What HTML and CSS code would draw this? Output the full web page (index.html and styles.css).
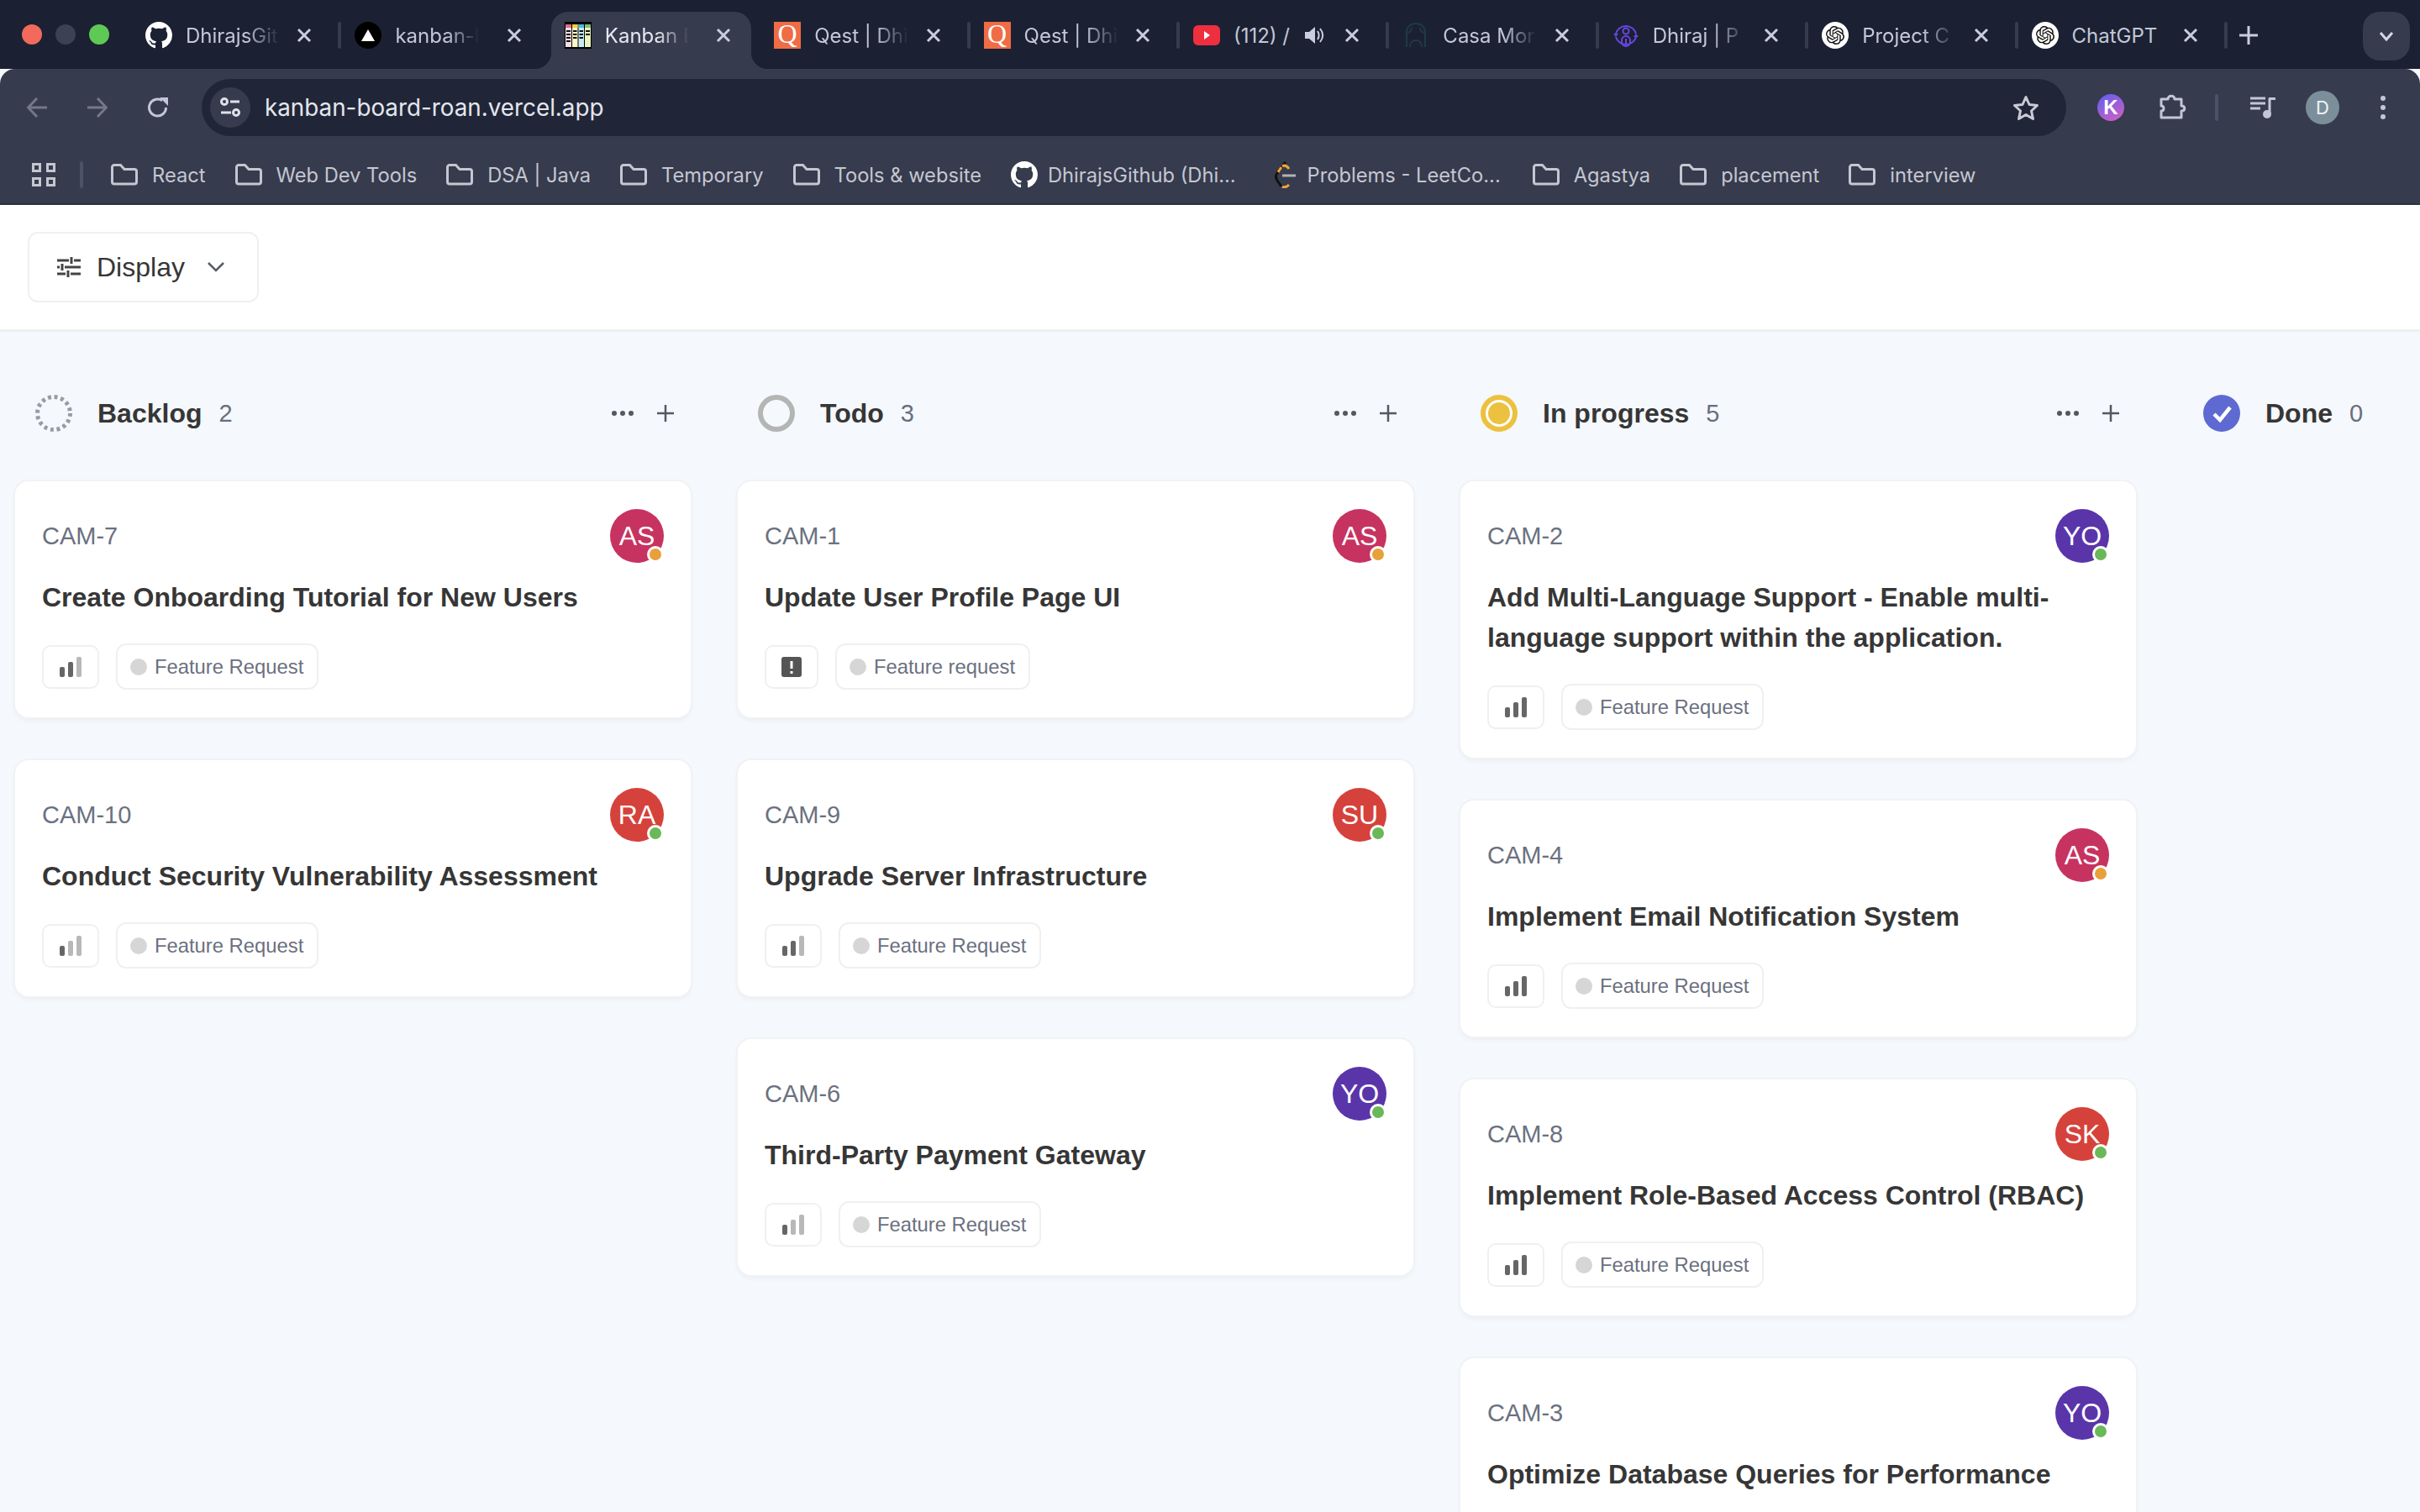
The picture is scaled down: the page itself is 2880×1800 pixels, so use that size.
FILE: index.html
```html
<!DOCTYPE html>
<html lang="en">
<head>
  <meta charset="UTF-8">
  <title>Kanban Board</title>
  <link rel="stylesheet" href="styles.css">
</head>
<body>

  <!-- shared icons -->
  <svg class="defs" width="0" height="0">
    <symbol id="i-github" viewBox="0 0 16 16"><path fill="#fff" d="M8 0C3.58 0 0 3.58 0 8c0 3.54 2.29 6.53 5.47 7.59.4.07.55-.17.55-.38 0-.19-.01-.82-.01-1.49-2.01.37-2.53-.49-2.69-.94-.09-.23-.48-.94-.82-1.13-.28-.15-.68-.52-.01-.53.63-.01 1.08.58 1.23.82.72 1.21 1.87.87 2.33.66.07-.52.28-.87.51-1.07-1.78-.2-3.64-.89-3.64-3.95 0-.87.31-1.59.82-2.15-.08-.2-.36-1.02.08-2.12 0 0 .67-.21 2.2.82.64-.18 1.32-.27 2-.27s1.36.09 2 .27c1.53-1.04 2.2-.82 2.2-.82.44 1.1.16 1.92.08 2.12.51.56.82 1.27.82 2.15 0 3.07-1.87 3.75-3.65 3.95.29.25.54.73.54 1.48 0 1.07-.01 1.93-.01 2.2 0 .21.15.46.55.38A8.013 8.013 0 0016 8c0-4.42-3.58-8-8-8z"/></symbol>
    <symbol id="i-close" viewBox="0 0 26 26"><path d="M6 6l14 14M20 6L6 20" stroke="#c9cddd" stroke-width="3" fill="none"/></symbol>
    <symbol id="i-folder" viewBox="0 0 32 26"><path d="M1.5 4a2.500 2.500 0 0 1 2.500-2.500h7.500l4.500 5h12a2.500 2.500 0 0 1 2.500 2.500v12.500a2.500 2.500 0 0 1-2.500 2.500H4a2.500 2.500 0 0 1-2.500-2.500z" fill="none" stroke="#c5c7d0" stroke-width="3"/></symbol>
    <symbol id="i-gpt" viewBox="0 0 32 32">
      <circle cx="16" cy="16" r="16" fill="#fff"/>
      <path transform="translate(5 5) scale(.917)" fill="#111" d="M22.282 9.821a5.985 5.985 0 0 0-.516-4.91 6.046 6.046 0 0 0-6.51-2.9A6.065 6.065 0 0 0 4.981 4.18a5.985 5.985 0 0 0-3.998 2.9 6.046 6.046 0 0 0 .743 7.097 5.98 5.98 0 0 0 .51 4.911 6.051 6.051 0 0 0 6.515 2.9A5.985 5.985 0 0 0 13.26 24a6.056 6.056 0 0 0 5.772-4.206 5.99 5.99 0 0 0 3.997-2.9 6.056 6.056 0 0 0-.747-7.073zM13.26 22.43a4.476 4.476 0 0 1-2.876-1.04l.141-.081 4.779-2.758a.795.795 0 0 0 .392-.681v-6.737l2.02 1.168a.071.071 0 0 1 .038.052v5.583a4.504 4.504 0 0 1-4.494 4.494zM3.6 18.304a4.47 4.47 0 0 1-.535-3.014l.142.085 4.783 2.759a.771.771 0 0 0 .78 0l5.843-3.369v2.332a.08.08 0 0 1-.033.062L9.74 19.95a4.5 4.5 0 0 1-6.14-1.646zM2.34 7.896a4.485 4.485 0 0 1 2.366-1.973V11.6a.766.766 0 0 0 .388.676l5.815 3.355-2.02 1.168a.076.076 0 0 1-.071 0l-4.83-2.786A4.504 4.504 0 0 1 2.34 7.872zm16.597 3.855l-5.833-3.387L15.119 7.2a.076.076 0 0 1 .071 0l4.83 2.791a4.494 4.494 0 0 1-.676 8.105v-5.678a.79.79 0 0 0-.407-.667zm2.01-3.023l-.141-.085-4.774-2.782a.776.776 0 0 0-.785 0L9.409 9.23V6.897a.066.066 0 0 1 .028-.061l4.83-2.787a4.5 4.5 0 0 1 6.68 4.66zm-12.64 4.135l-2.02-1.164a.08.08 0 0 1-.038-.057V6.075a4.5 4.5 0 0 1 7.375-3.453l-.142.08L8.704 5.46a.795.795 0 0 0-.393.681zm1.097-2.365l2.602-1.5 2.607 1.5v2.999l-2.597 1.5-2.607-1.5z"/>
    </symbol>
    <symbol id="i-dots" viewBox="0 0 26 6"><g fill="#55585f"><circle cx="3" cy="3" r="3"/><circle cx="13" cy="3" r="3"/><circle cx="23" cy="3" r="3"/></g></symbol>
    <symbol id="i-plus" viewBox="0 0 20 20"><path d="M10 0v20M0 10h20" stroke="#55585f" stroke-width="2.500" fill="none"/></symbol>
    <symbol id="i-bars1" viewBox="0 0 26 24"><rect x="0" y="12" width="6" height="12" rx="2" fill="#666"/><rect x="10" y="6" width="6" height="18" rx="2" fill="#b8b8b8"/><rect x="20" y="0" width="6" height="24" rx="2" fill="#b8b8b8"/></symbol>
    <symbol id="i-bars2" viewBox="0 0 26 24"><rect x="0" y="12" width="6" height="12" rx="2" fill="#666"/><rect x="10" y="6" width="6" height="18" rx="2" fill="#666"/><rect x="20" y="0" width="6" height="24" rx="2" fill="#b8b8b8"/></symbol>
    <symbol id="i-bars3" viewBox="0 0 26 24"><rect x="0" y="12" width="6" height="12" rx="2" fill="#666"/><rect x="10" y="6" width="6" height="18" rx="2" fill="#666"/><rect x="20" y="0" width="6" height="24" rx="2" fill="#666"/></symbol>
  </svg>

  <!-- browser chrome -->
  <header class="tabstrip">
    <div class="lights">
      <span class="light light-red"></span>
      <span class="light light-gray"></span>
      <span class="light light-green"></span>
    </div>

    <div class="tab">
      <svg class="favicon"><use href="#i-github"/></svg>
      <span class="tab-title fade">DhirajsGit</span>
      <svg class="tab-close"><use href="#i-close"/></svg>
    </div>
    <span class="tab-sep"></span>
    <div class="tab">
      <svg class="favicon" viewBox="0 0 32 32"><circle cx="16" cy="16" r="16" fill="#000"/><path d="M16 9l8 14H8z" fill="#fff"/></svg>
      <span class="tab-title fade-soon">kanban-b</span>
      <svg class="tab-close"><use href="#i-close"/></svg>
    </div>
    <span class="tab-sep tab-sep-off"></span>
    <div class="tab tab-active">
      <svg class="favicon" viewBox="0 0 32 32">
        <rect width="32" height="32" fill="#000"/>
        <rect x="1" y="3" width="7" height="27" fill="#f6dfe6"/>
        <rect x="9" y="3" width="6.500" height="27" fill="#fdf6c6"/>
        <rect x="16.500" y="3" width="6.500" height="27" fill="#c6eaf8"/>
        <rect x="24" y="3" width="7" height="27" fill="#e8f4bc"/>
        <rect x="1" y="3" width="7" height="4" fill="#d9708c"/>
        <rect x="9" y="3" width="6.500" height="4" fill="#eccf3f"/>
        <rect x="16.500" y="3" width="6.500" height="4" fill="#4fb4dc"/>
        <rect x="24" y="3" width="7" height="4" fill="#7fbd7a"/>
        <path d="M2 10h5v2H2zm0 4h5v2H2zm0 4h5v2H2zm0 4h5v2H2zm8-12h4.500v2H10zm0 4h4.500v2H10zm0 4h4.500v2H10zm7.500-8H22v2h-4.500zm0 4H22v2h-4.500zm0 4H22v2h-4.500zM25 10h5v2h-5zm0 4h5v2h-5z" fill="#111"/>
      </svg>
      <span class="tab-title fade-soon">Kanban B</span>
      <svg class="tab-close"><use href="#i-close"/></svg>
    </div>
    <span class="tab-sep tab-sep-off"></span>
    <div class="tab">
      <span class="favicon favicon-q">Q</span>
      <span class="tab-title fade">Qest | Dhi</span>
      <svg class="tab-close"><use href="#i-close"/></svg>
    </div>
    <span class="tab-sep"></span>
    <div class="tab">
      <span class="favicon favicon-q">Q</span>
      <span class="tab-title fade">Qest | Dhi</span>
      <svg class="tab-close"><use href="#i-close"/></svg>
    </div>
    <span class="tab-sep"></span>
    <div class="tab">
      <svg class="favicon" viewBox="0 0 32 32"><rect y="4" width="32" height="24" rx="6" fill="#ee2f3f"/><path d="M13 11l7 5-7 5z" fill="#fff"/></svg>
      <span class="tab-title tab-title-short">(112) /</span>
      <svg class="tab-audio" viewBox="0 0 24 26"><path d="M1 9h5l7-6v20l-7-6H1z" fill="#c9cddd"/><path d="M16 8c2 3 2 7 0 10M19 5c4 5 4 11 0 16" fill="none" stroke="#c9cddd" stroke-width="2"/></svg>
      <svg class="tab-close"><use href="#i-close"/></svg>
    </div>
    <span class="tab-sep"></span>
    <div class="tab">
      <svg class="favicon" viewBox="0 0 32 32"><path d="M5 30V12C5 6 10 2 16 2s11 4 11 10v18M5 13c4 0 6-3 6-6M27 13c-4 0-6-3-6-6M9 30c0-5 3-8 7-8s7 3 7 8" fill="none" stroke="#1f3a44" stroke-width="2"/></svg>
      <span class="tab-title fade">Casa Mor</span>
      <svg class="tab-close"><use href="#i-close"/></svg>
    </div>
    <span class="tab-sep"></span>
    <div class="tab">
      <svg class="favicon" viewBox="0 0 32 32"><g fill="none" stroke="#6a45e0" stroke-width="2"><path d="M4 14A12.500 12.500 0 0 1 28 14M4 18a12.500 12.500 0 0 0 24 0"/><circle cx="16" cy="11" r="3.500"/><rect x="11" y="17" width="10" height="12" rx="5"/><path d="M16 20v6"/></g><path d="M1 14h6l-3 4zm24 4h6l-3-4z" fill="#6a45e0"/></svg>
      <span class="tab-title fade">Dhiraj | P</span>
      <svg class="tab-close"><use href="#i-close"/></svg>
    </div>
    <span class="tab-sep"></span>
    <div class="tab">
      <svg class="favicon"><use href="#i-gpt"/></svg>
      <span class="tab-title fade">Project C</span>
      <svg class="tab-close"><use href="#i-close"/></svg>
    </div>
    <span class="tab-sep"></span>
    <div class="tab">
      <svg class="favicon"><use href="#i-gpt"/></svg>
      <span class="tab-title">ChatGPT</span>
      <svg class="tab-close"><use href="#i-close"/></svg>
    </div>
    <span class="tab-sep"></span>

    <svg class="new-tab" viewBox="0 0 22 22"><path d="M11 0v22M0 11h22" stroke="#c9cddd" stroke-width="3" fill="none"/></svg>
    <div class="tab-search">
      <svg width="18" height="12" viewBox="0 0 18 12"><path d="M2 2l7 8 7-8" fill="none" stroke="#d5d8e4" stroke-width="3"/></svg>
    </div>
  </header>

  <div class="toolbar">
    <svg class="nav-icon" viewBox="0 0 24 24"><path d="M24 12H2M12 1L1.500 12 12 23" fill="none" stroke="#747886" stroke-width="3"/></svg>
    <svg class="nav-icon" viewBox="0 0 24 24"><path d="M0 12h22M12 1l10.500 11L12 23" fill="none" stroke="#747886" stroke-width="3"/></svg>
    <svg class="nav-icon" viewBox="0 0 24 24"><path d="M21.500 12A10 10 0 1 1 17 3.700" fill="none" stroke="#c2c6d8" stroke-width="3"/><path d="M14 0h10v10z" fill="#c2c6d8"/></svg>

    <div class="omnibox">
      <span class="site-info">
        <svg width="24" height="24" viewBox="0 0 24 24"><g fill="none" stroke="#dfe1ea" stroke-width="3"><circle cx="5" cy="5" r="3.500"/><path d="M12 5h11M1 18h12"/><circle cx="19" cy="18" r="3.500"/></g></svg>
      </span>
      <span class="url">kanban-board-roan.vercel.app</span>
      <svg class="star" viewBox="0 0 32 30"><path d="M16 2.500l4 9 9.500 1-7 6.500 2 9.500-8.500-5-8.500 5 2-9.500-7-6.500 9.500-1z" fill="none" stroke="#c8cad4" stroke-width="3" stroke-linejoin="round"/></svg>
    </div>

    <span class="ext-k">K</span>
    <svg class="ext-puzzle" viewBox="0 0 32 32"><path d="M2 6h8c0-5 8-5 8 0h8v8c5 0 5 6 0 6v8H2v-8c4 0 4-6 0-6z" fill="none" stroke="#c2c6d8" stroke-width="3" stroke-linejoin="round"/></svg>
    <span class="toolbar-sep"></span>
    <svg class="media" viewBox="0 0 30 26"><path d="M0 2h18M0 8h18M0 14h12" stroke="#c2c6d8" stroke-width="3"/><path d="M23 2v18" stroke="#c2c6d8" stroke-width="3"/><path d="M22 1h8v3h-8z" fill="#c2c6d8"/><circle cx="20" cy="21" r="5" fill="#c2c6d8"/></svg>
    <span class="profile">D</span>
    <svg class="kebab" viewBox="0 0 6 28"><g fill="#c2c6d8"><circle cx="3" cy="3" r="3"/><circle cx="3" cy="14" r="3"/><circle cx="3" cy="25" r="3"/></g></svg>
  </div>

  <nav class="bookmarks">
    <svg class="apps" viewBox="0 0 28 28"><g fill="none" stroke="#c5c7d0" stroke-width="3"><rect x="1.500" y="1.500" width="8" height="8"/><rect x="18.500" y="1.500" width="8" height="8"/><rect x="1.500" y="18.500" width="8" height="8"/><rect x="18.500" y="18.500" width="8" height="8"/></g></svg>
    <span class="bookmarks-sep"></span>
    <a class="bookmark"><svg class="folder"><use href="#i-folder"/></svg>React</a>
    <a class="bookmark"><svg class="folder"><use href="#i-folder"/></svg>Web Dev Tools</a>
    <a class="bookmark"><svg class="folder"><use href="#i-folder"/></svg>DSA | Java</a>
    <a class="bookmark"><svg class="folder"><use href="#i-folder"/></svg>Temporary</a>
    <a class="bookmark"><svg class="folder"><use href="#i-folder"/></svg>Tools &amp; website</a>
    <a class="bookmark bookmark-gh"><svg class="favicon"><use href="#i-github"/></svg>DhirajsGithub (Dhi...</a>
    <a class="bookmark bookmark-lc">
      <svg class="lc-icon" viewBox="0 0 28 32"><path d="M16 1L6 14c-2 3-2 6 0 9l5 7" fill="none" stroke="#111" stroke-width="3"/><path d="M11 7l-4 6M12 30c3 2 6 0 8-2M12 6c3-2 6 0 8 3" fill="none" stroke="#f1a33a" stroke-width="3"/><path d="M12 17h16" stroke="#b3b3b3" stroke-width="3"/></svg>
      Problems - LeetCo...
    </a>
    <a class="bookmark"><svg class="folder"><use href="#i-folder"/></svg>Agastya</a>
    <a class="bookmark"><svg class="folder"><use href="#i-folder"/></svg>placement</a>
    <a class="bookmark"><svg class="folder"><use href="#i-folder"/></svg>interview</a>
  </nav>

  <!-- kanban app -->
  <div class="app-header">
    <button class="display-btn">
      <svg class="display-icon" viewBox="0 0 28 24"><path d="M0 4h14M20 4h8M0 12h3M9 12h19M0 20h10M16 20h12M17 0v8M6 8v8M13 16v8" stroke="#444" stroke-width="3" fill="none"/></svg>
      <span>Display</span>
      <svg class="display-caret" viewBox="0 0 20 12"><path d="M1 1l9 9 9-9" fill="none" stroke="#555b66" stroke-width="2.500"/></svg>
    </button>
  </div>

  <main class="board">

    <section class="column">
      <div class="column-head">
        <svg class="status" viewBox="0 0 44 44"><circle cx="22" cy="22" r="19.500" fill="none" stroke="#989ca2" stroke-width="5" stroke-dasharray="3.900 3.760"/></svg>
        <span class="column-name">Backlog</span>
        <span class="column-count">2</span>
        <svg class="act-dots"><use href="#i-dots"/></svg>
        <svg class="act-plus"><use href="#i-plus"/></svg>
      </div>

      <article class="card">
        <div class="card-top">
          <span class="card-id">CAM-7</span>
          <span class="avatar av-as">AS<i class="presence away"></i></span>
        </div>
        <h4 class="card-title">Create Onboarding Tutorial for New Users</h4>
        <div class="card-tags">
          <span class="priority"><svg class="bars"><use href="#i-bars2"/></svg></span>
          <span class="tag"><i class="tag-dot"></i>Feature Request</span>
        </div>
      </article>

      <article class="card">
        <div class="card-top">
          <span class="card-id">CAM-10</span>
          <span class="avatar av-red">RA<i class="presence on"></i></span>
        </div>
        <h4 class="card-title">Conduct Security Vulnerability Assessment</h4>
        <div class="card-tags">
          <span class="priority"><svg class="bars"><use href="#i-bars1"/></svg></span>
          <span class="tag"><i class="tag-dot"></i>Feature Request</span>
        </div>
      </article>
    </section>

    <section class="column">
      <div class="column-head">
        <svg class="status" viewBox="0 0 44 44"><circle cx="22" cy="22" r="19" fill="none" stroke="#b5b5b5" stroke-width="6"/></svg>
        <span class="column-name">Todo</span>
        <span class="column-count">3</span>
        <svg class="act-dots"><use href="#i-dots"/></svg>
        <svg class="act-plus"><use href="#i-plus"/></svg>
      </div>

      <article class="card">
        <div class="card-top">
          <span class="card-id">CAM-1</span>
          <span class="avatar av-as">AS<i class="presence away"></i></span>
        </div>
        <h4 class="card-title">Update User Profile Page UI</h4>
        <div class="card-tags">
          <span class="priority priority-urgent">
            <svg class="urgent" viewBox="0 0 24 24"><rect width="24" height="24" rx="3" fill="#555"/><path d="M12 5v9M12 17v3" stroke="#fff" stroke-width="3" fill="none"/></svg>
          </span>
          <span class="tag"><i class="tag-dot"></i>Feature request</span>
        </div>
      </article>

      <article class="card">
        <div class="card-top">
          <span class="card-id">CAM-9</span>
          <span class="avatar av-red">SU<i class="presence on"></i></span>
        </div>
        <h4 class="card-title">Upgrade Server Infrastructure</h4>
        <div class="card-tags">
          <span class="priority"><svg class="bars"><use href="#i-bars2"/></svg></span>
          <span class="tag"><i class="tag-dot"></i>Feature Request</span>
        </div>
      </article>

      <article class="card">
        <div class="card-top">
          <span class="card-id">CAM-6</span>
          <span class="avatar av-yo">YO<i class="presence on"></i></span>
        </div>
        <h4 class="card-title">Third-Party Payment Gateway</h4>
        <div class="card-tags">
          <span class="priority"><svg class="bars"><use href="#i-bars1"/></svg></span>
          <span class="tag"><i class="tag-dot"></i>Feature Request</span>
        </div>
      </article>
    </section>

    <section class="column">
      <div class="column-head">
        <svg class="status" viewBox="0 0 44 44"><circle cx="22" cy="22" r="22" fill="#ecc13f"/><circle cx="22" cy="22" r="14.500" fill="none" stroke="#fff" stroke-width="3"/></svg>
        <span class="column-name">In progress</span>
        <span class="column-count">5</span>
        <svg class="act-dots"><use href="#i-dots"/></svg>
        <svg class="act-plus"><use href="#i-plus"/></svg>
      </div>

      <article class="card">
        <div class="card-top">
          <span class="card-id">CAM-2</span>
          <span class="avatar av-yo">YO<i class="presence on"></i></span>
        </div>
        <h4 class="card-title">Add Multi-Language Support - Enable multi-language support within the application.</h4>
        <div class="card-tags">
          <span class="priority"><svg class="bars"><use href="#i-bars3"/></svg></span>
          <span class="tag"><i class="tag-dot"></i>Feature Request</span>
        </div>
      </article>

      <article class="card">
        <div class="card-top">
          <span class="card-id">CAM-4</span>
          <span class="avatar av-as">AS<i class="presence away"></i></span>
        </div>
        <h4 class="card-title">Implement Email Notification System</h4>
        <div class="card-tags">
          <span class="priority"><svg class="bars"><use href="#i-bars3"/></svg></span>
          <span class="tag"><i class="tag-dot"></i>Feature Request</span>
        </div>
      </article>

      <article class="card">
        <div class="card-top">
          <span class="card-id">CAM-8</span>
          <span class="avatar av-red">SK<i class="presence on"></i></span>
        </div>
        <h4 class="card-title">Implement Role-Based Access Control (RBAC)</h4>
        <div class="card-tags">
          <span class="priority"><svg class="bars"><use href="#i-bars3"/></svg></span>
          <span class="tag"><i class="tag-dot"></i>Feature Request</span>
        </div>
      </article>

      <article class="card">
        <div class="card-top">
          <span class="card-id">CAM-3</span>
          <span class="avatar av-yo">YO<i class="presence on"></i></span>
        </div>
        <h4 class="card-title">Optimize Database Queries for Performance</h4>
      </article>
    </section>

    <section class="column">
      <div class="column-head">
        <svg class="status" viewBox="0 0 44 44"><circle cx="22" cy="22" r="22" fill="#5e6ad2"/><path d="M13 23l7 7 12-15" fill="none" stroke="#fff" stroke-width="4.500"/></svg>
        <span class="column-name">Done</span>
        <span class="column-count">0</span>
      </div>
    </section>

  </main>

</body>
</html>
```

FILE: styles.css
```css
* {
  box-sizing: border-box;
}
html, body {
  height: 100%;
}
body {
  margin: 0;
  overflow: hidden;
  display: flex;
  flex-direction: column;
  background: #f5f8fc;
  font-family: "Liberation Sans", Arial, sans-serif;
}
.defs {
  display: block;
  height: 0;
}

/* tab strip */
.tabstrip {
  display: flex;
  align-items: center;
  flex: none;
  height: 82px;
  padding-top: 14px;
  background: #1b2132;
  font-family: Inter, "Liberation Sans", sans-serif;
}
.lights {
  display: flex;
  gap: 16px;
  width: 157px;
  padding-left: 26px;
  margin-top: -14px;
}
.light {
  width: 24px;
  height: 24px;
  border-radius: 50%;
}
.light-red { background: #f16a5c; }
.light-gray { background: #3b4252; }
.light-green { background: #5fc955; }

.tab {
  position: relative;
  display: flex;
  align-items: center;
  flex: none;
  width: 245.4px;
  height: 68px;
  padding: 0 27px 12px 16px;
  font-size: 24px;
  color: #c3c7d8;
}
.tab-active {
  width: 238.4px;
  margin-right: 7px;
  padding-right: 20px;
  background: #363b4e;
  border-radius: 20px 20px 0 0;
  color: #e6e8f0;
}
.tab-active::before,
.tab-active::after {
  content: "";
  position: absolute;
  bottom: 0;
  width: 20px;
  height: 20px;
}
.tab-active::before {
  left: -20px;
  background: radial-gradient(circle at 0 0, #1b2132 20px, #363b4e 20.5px);
}
.tab-active::after {
  right: -20px;
  background: radial-gradient(circle at 100% 0, #1b2132 20px, #363b4e 20.5px);
}
.favicon {
  flex: none;
  width: 32px;
  height: 32px;
}
.favicon-q {
  display: block;
  background: #f06c45;
  color: #fff;
  font-family: "Liberation Serif", serif;
  font-size: 32px;
  line-height: 28px;
  text-align: center;
}
.tab-title {
  flex: 1;
  margin-left: 16px;
  white-space: nowrap;
}
.fade {
  -webkit-mask-image: linear-gradient(to right, #000 72px, transparent 112px);
  mask-image: linear-gradient(to right, #000 72px, transparent 112px);
}
.fade-soon {
  -webkit-mask-image: linear-gradient(to right, #000 62px, transparent 100px);
  mask-image: linear-gradient(to right, #000 62px, transparent 100px);
}
.tab-close {
  flex: none;
  width: 26px;
  height: 26px;
  margin-left: 12px;
}
.tab-audio {
  flex: none;
  width: 24px;
  height: 26px;
}
.tab-title-short {
  margin-right: 4px;
}
.tab-audio + .tab-close {
  margin-left: 20px;
}
.tab-sep {
  flex: none;
  width: 4px;
  height: 32px;
  margin-top: -12px;
  border-radius: 2px;
  background: #363b4e;
}
.tab-sep-off {
  background: transparent;
}
.new-tab {
  flex: none;
  width: 22px;
  height: 22px;
  margin: -12px 0 0 14px;
}
.tab-search {
  display: flex;
  align-items: center;
  justify-content: center;
  flex: none;
  width: 56px;
  height: 58px;
  margin: -10px 12px 0 auto;
  border-radius: 20px;
  background: #363b4e;
}

/* address bar */
.toolbar {
  display: flex;
  align-items: center;
  flex: none;
  height: 92px;
  padding-left: 32px;
  background: #363b4e;
  border-radius: 18px 18px 0 0;
}
.nav-icon {
  flex: none;
  width: 24px;
  height: 24px;
  margin-right: 48px;
}
.nav-icon:nth-child(3) {
  margin-right: 40px;
}
.omnibox {
  display: flex;
  align-items: center;
  flex: none;
  width: 2219px;
  height: 68px;
  padding: 0 32px 0 10px;
  background: #202637;
  border-radius: 34px;
  font-family: Inter, "Liberation Sans", sans-serif;
}
.site-info {
  display: flex;
  align-items: center;
  justify-content: center;
  width: 48px;
  height: 48px;
  border-radius: 50%;
  background: #363b4e;
}
.url {
  flex: 1;
  margin-left: 17px;
  font-size: 27.8px;
  color: #e4e6ee;
}
.star {
  width: 32px;
  height: 30px;
}
.ext-k {
  display: flex;
  align-items: center;
  justify-content: center;
  flex: none;
  width: 32px;
  height: 32px;
  margin-left: 37px;
  border-radius: 50%;
  background: linear-gradient(150deg, #5a5ff0, #d85fc0);
  color: #fff;
  font-size: 24px;
  font-weight: bold;
}
.ext-puzzle {
  flex: none;
  width: 32px;
  height: 32px;
  margin-left: 42px;
}
.toolbar-sep {
  flex: none;
  width: 4px;
  height: 32px;
  margin-left: 34px;
  border-radius: 2px;
  background: #4d5266;
}
.media {
  flex: none;
  width: 30px;
  height: 26px;
  margin-left: 38px;
}
.profile {
  display: flex;
  align-items: center;
  justify-content: center;
  flex: none;
  width: 40px;
  height: 40px;
  margin-left: 36px;
  border-radius: 50%;
  background: #7b8f9b;
  color: #f2f4f6;
  font-family: Inter, "Liberation Sans", sans-serif;
  font-size: 22px;
}
.kebab {
  flex: none;
  width: 6px;
  height: 28px;
  margin-left: 49px;
}

/* bookmarks */
.bookmarks {
  display: flex;
  align-items: center;
  flex: none;
  height: 68px;
  padding: 0 0 0 38px;
  background: #363b4e;
  font-family: Inter, "Liberation Sans", sans-serif;
  font-size: 23.7px;
  color: #c5c7d0;
}
.apps {
  flex: none;
  width: 28px;
  height: 28px;
}
.bookmarks-sep {
  flex: none;
  width: 4px;
  height: 32px;
  margin: 0 33px 0 29px;
  border-radius: 2px;
  background: #4d5266;
}
.bookmark {
  display: flex;
  align-items: center;
  gap: 17px;
  margin-right: 35px;
  white-space: nowrap;
}
.bookmark-gh {
  gap: 12px;
  margin-right: 43px;
}
.bookmark-lc {
  gap: 14px;
  margin-right: 38px;
}
.folder {
  flex: none;
  width: 32px;
  height: 26px;
}
.lc-icon {
  flex: none;
  width: 28px;
  height: 32px;
}

/* app header */
.app-header {
  flex: none;
  height: 153px;
  padding: 32px 0 0 33px;
  background: #fff;
  border-top: 2px solid #2c3040;
  border-bottom: 3px solid #f0f0f1;
}
.display-btn {
  display: flex;
  align-items: center;
  width: 275px;
  height: 84px;
  padding: 0 0 0 33px;
  background: #fff;
  border: 2px solid #f0f0f1;
  border-radius: 12px;
  font-family: "Liberation Sans", Arial, sans-serif;
  font-size: 32px;
  color: #363636;
}
.display-icon {
  width: 28px;
  height: 24px;
}
.display-btn span {
  margin: 0 27px 0 19px;
}
.display-caret {
  width: 20px;
  height: 12px;
}

/* board */
.board {
  flex: 1;
  display: flex;
  gap: 56px;
  padding-left: 18px;
  overflow: hidden;
}
.column {
  flex: none;
  display: flex;
  flex-direction: column;
  gap: 51px;
  width: 804px;
}
.column-head {
  display: flex;
  align-items: center;
  height: 44px;
  margin: 75px 0 8px;
  padding: 0 20px 0 24px;
}
.status {
  flex: none;
  width: 44px;
  height: 44px;
  margin-right: 30px;
}
.column-name {
  font-size: 32px;
  font-weight: bold;
  color: #363636;
}
.column-count {
  margin-left: 20px;
  font-size: 29px;
  color: #696e7c;
}
.act-dots {
  width: 26px;
  height: 6px;
  margin: -1px 28px 0 auto;
}
.act-plus {
  width: 20px;
  height: 20px;
  margin-top: -1px;
}

/* cards */
.card {
  flex: none;
  padding: 33px 32px;
  background: #fff;
  border-radius: 16px;
  box-shadow: 0 0 0 2px #f1f2f4, 0 3px 6px rgba(0, 0, 0, 0.06);
}
.card-top {
  display: flex;
  align-items: center;
  justify-content: space-between;
}
.card-id {
  font-size: 29px;
  color: #6b7180;
}
.avatar {
  position: relative;
  display: flex;
  align-items: center;
  justify-content: center;
  width: 64px;
  height: 64px;
  border-radius: 50%;
  color: #fff;
  font-size: 32px;
}
.av-as { background: #c73360; }
.av-red { background: #d5423b; }
.av-yo { background: #5935a9; }
.presence {
  position: absolute;
  right: 0;
  bottom: 0;
  width: 20px;
  height: 20px;
  border: 3px solid #fff;
  border-radius: 50%;
}
.presence.away { background: #e8a03a; }
.presence.on { background: #6bb85a; }
.card-title {
  margin: 17px 0 31px;
  font-size: 32px;
  font-weight: bold;
  line-height: 48px;
  color: #363636;
}
.card-tags {
  display: flex;
  align-items: center;
  gap: 20px;
}
.priority {
  display: flex;
  align-items: center;
  justify-content: center;
  width: 68px;
  height: 52px;
  border: 2px solid #f0f0f1;
  border-radius: 10px;
}
.priority-urgent {
  width: 64px;
}
.bars {
  width: 26px;
  height: 24px;
}
.urgent {
  width: 24px;
  height: 24px;
}
.tag {
  display: flex;
  align-items: center;
  height: 55px;
  padding: 0 16px 0 15px;
  border: 2px solid #f0f0f1;
  border-radius: 12px;
  font-size: 23.8px;
  color: #6b7080;
}
.tag-dot {
  flex: none;
  width: 20px;
  height: 20px;
  margin-right: 9px;
  border-radius: 50%;
  background: #d6d6d6;
}
```
